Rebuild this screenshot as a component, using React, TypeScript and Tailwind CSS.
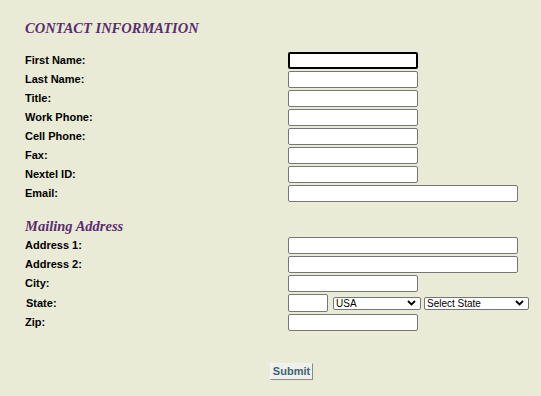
import { ReactNode } from "react";

const inputBase =
  "h-[17px] rounded-[2px] border border-[#767676] bg-white outline-none";

function Row({ label, children, className = "" }: { label: string; children: ReactNode; className?: string }) {
  return (
    <div className={`flex items-center h-[17px] ${className}`}>
      <label className="w-[263px] shrink-0 text-[11px] font-bold text-black leading-none">
        {label}
      </label>
      {children}
    </div>
  );
}

function Chevron() {
  return (
    <svg
      width="9"
      height="6"
      viewBox="0 0 9 6"
      className="pointer-events-none absolute right-[5px] top-[3.5px]"
    >
      <path d="M1 1 L4.5 4.5 L8 1" fill="none" stroke="#000" strokeWidth="1.8" />
    </svg>
  );
}

function FakeSelect({ value, width }: { value: string; width: string }) {
  return (
    <div className={`relative h-[13px] ${width}`}>
      <select
        defaultValue={value}
        className="block h-[13px] w-full appearance-none rounded-[2px] border border-[#767676] bg-white py-0 pl-[2px] text-[10px] leading-[11px] text-black outline-none"
      >
        <option>{value}</option>
      </select>
      <Chevron />
    </div>
  );
}

export default function App() {
  return (
    <div
      className="min-h-[396px] w-full bg-[#e9ebd6] pl-[25px] pt-[18px]"
      style={{ fontFamily: '"Liberation Sans", Arial, sans-serif' }}
    >
      <h2 className="font-['Liberation_Serif',serif] text-[14.5px] font-bold italic leading-[20px] text-[#5a2d6e]">
        CONTACT INFORMATION
      </h2>

      <div className="mt-[14px] flex flex-col gap-[2px]">
        <Row label="First Name:">
          <input className="h-[17px] w-[130px] rounded-[2px] border-2 border-black bg-white outline-none" />
        </Row>
        <Row label="Last Name:">
          <input className={`${inputBase} w-[130px]`} />
        </Row>
        <Row label="Title:">
          <input className={`${inputBase} w-[130px]`} />
        </Row>
        <Row label="Work Phone:">
          <input className={`${inputBase} w-[130px]`} />
        </Row>
        <Row label="Cell Phone:">
          <input className={`${inputBase} w-[130px]`} />
        </Row>
        <Row label="Fax:">
          <input className={`${inputBase} w-[130px]`} />
        </Row>
        <Row label="Nextel ID:">
          <input className={`${inputBase} w-[130px]`} />
        </Row>
        <Row label="Email:">
          <input className={`${inputBase} w-[230px]`} />
        </Row>
      </div>

      <h3 className="mt-[14px] font-['Liberation_Serif',serif] text-[14.5px] font-bold italic leading-[20px] text-[#5a2d6e]">
        Mailing Address
      </h3>

      <div className="mt-[1px] flex flex-col gap-[2px]">
        <Row label="Address 1:">
          <input className={`${inputBase} w-[230px]`} />
        </Row>
        <Row label="Address 2:">
          <input className={`${inputBase} w-[230px]`} />
        </Row>
        <Row label="City:">
          <input className={`${inputBase} w-[130px]`} />
        </Row>
        <div className="flex h-[18px] items-center">
          <label className="w-[263px] shrink-0 pl-[1px] text-[11px] font-bold leading-none text-black">
            State:
          </label>
          <input className="h-[18px] w-[40px] rounded-[2px] border border-[#767676] bg-white outline-none" />
          <div className="ml-[5px] flex gap-[3px]">
            <FakeSelect value="USA" width="w-[88px]" />
            <FakeSelect value="Select State" width="w-[105px]" />
          </div>
        </div>
        <Row label="Zip:">
          <input className={`${inputBase} w-[130px]`} />
        </Row>
      </div>

      <div className="mt-[32px] pl-[245px]">
        <button className="block h-[17px] w-[43px] border border-t-[#f4f4f4] border-l-[#f4f4f4] border-r-[#8a8a8a] border-b-[#8a8a8a] bg-[#f0f0ec] text-[11px] font-bold leading-none text-[#3d6470]">
          Submit
        </button>
      </div>
    </div>
  );
}
